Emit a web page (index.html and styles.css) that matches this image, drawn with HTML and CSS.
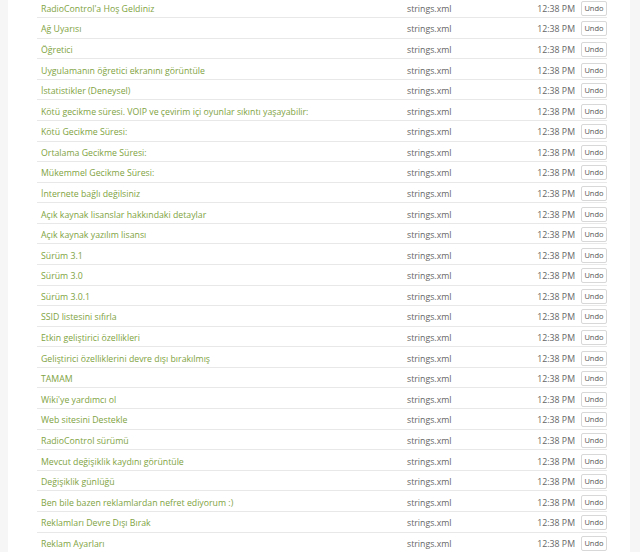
FILE: index.html
```html
<!DOCTYPE html>
<html>
<head>
<meta charset="utf-8">
<link rel="stylesheet" href="styles.css">
</head>
<body>
<div class="panel">
<table class="log">
<tbody>
<tr><td class="str">RadioControl'a Hoş Geldiniz</td><td class="file">strings.xml</td><td class="time">12:38 PM</td><td class="act"><button class="undo">Undo</button></td></tr>
<tr><td class="str">Ağ Uyarısı</td><td class="file">strings.xml</td><td class="time">12:38 PM</td><td class="act"><button class="undo">Undo</button></td></tr>
<tr><td class="str">Öğretici</td><td class="file">strings.xml</td><td class="time">12:38 PM</td><td class="act"><button class="undo">Undo</button></td></tr>
<tr><td class="str">Uygulamanın öğretici ekranını görüntüle</td><td class="file">strings.xml</td><td class="time">12:38 PM</td><td class="act"><button class="undo">Undo</button></td></tr>
<tr><td class="str">İstatistikler (Deneysel)</td><td class="file">strings.xml</td><td class="time">12:38 PM</td><td class="act"><button class="undo">Undo</button></td></tr>
<tr><td class="str">Kötü gecikme süresi. VOIP ve çevirim içi oyunlar sıkıntı yaşayabilir:</td><td class="file">strings.xml</td><td class="time">12:38 PM</td><td class="act"><button class="undo">Undo</button></td></tr>
<tr><td class="str">Kötü Gecikme Süresi:</td><td class="file">strings.xml</td><td class="time">12:38 PM</td><td class="act"><button class="undo">Undo</button></td></tr>
<tr><td class="str">Ortalama Gecikme Süresi:</td><td class="file">strings.xml</td><td class="time">12:38 PM</td><td class="act"><button class="undo">Undo</button></td></tr>
<tr><td class="str">Mükemmel Gecikme Süresi:</td><td class="file">strings.xml</td><td class="time">12:38 PM</td><td class="act"><button class="undo">Undo</button></td></tr>
<tr><td class="str">İnternete bağlı değilsiniz</td><td class="file">strings.xml</td><td class="time">12:38 PM</td><td class="act"><button class="undo">Undo</button></td></tr>
<tr><td class="str">Açık kaynak lisanslar hakkındaki detaylar</td><td class="file">strings.xml</td><td class="time">12:38 PM</td><td class="act"><button class="undo">Undo</button></td></tr>
<tr><td class="str">Açık kaynak yazılım lisansı</td><td class="file">strings.xml</td><td class="time">12:38 PM</td><td class="act"><button class="undo">Undo</button></td></tr>
<tr><td class="str">Sürüm 3.1</td><td class="file">strings.xml</td><td class="time">12:38 PM</td><td class="act"><button class="undo">Undo</button></td></tr>
<tr><td class="str">Sürüm 3.0</td><td class="file">strings.xml</td><td class="time">12:38 PM</td><td class="act"><button class="undo">Undo</button></td></tr>
<tr><td class="str">Sürüm 3.0.1</td><td class="file">strings.xml</td><td class="time">12:38 PM</td><td class="act"><button class="undo">Undo</button></td></tr>
<tr><td class="str">SSID listesini sıfırla</td><td class="file">strings.xml</td><td class="time">12:38 PM</td><td class="act"><button class="undo">Undo</button></td></tr>
<tr><td class="str">Etkin geliştirici özellikleri</td><td class="file">strings.xml</td><td class="time">12:38 PM</td><td class="act"><button class="undo">Undo</button></td></tr>
<tr><td class="str">Geliştirici özelliklerini devre dışı bırakılmış</td><td class="file">strings.xml</td><td class="time">12:38 PM</td><td class="act"><button class="undo">Undo</button></td></tr>
<tr><td class="str">TAMAM</td><td class="file">strings.xml</td><td class="time">12:38 PM</td><td class="act"><button class="undo">Undo</button></td></tr>
<tr><td class="str">Wiki'ye yardımcı ol</td><td class="file">strings.xml</td><td class="time">12:38 PM</td><td class="act"><button class="undo">Undo</button></td></tr>
<tr><td class="str">Web sitesini Destekle</td><td class="file">strings.xml</td><td class="time">12:38 PM</td><td class="act"><button class="undo">Undo</button></td></tr>
<tr><td class="str">RadioControl sürümü</td><td class="file">strings.xml</td><td class="time">12:38 PM</td><td class="act"><button class="undo">Undo</button></td></tr>
<tr><td class="str">Mevcut değişiklik kaydını görüntüle</td><td class="file">strings.xml</td><td class="time">12:38 PM</td><td class="act"><button class="undo">Undo</button></td></tr>
<tr><td class="str">Değişiklik günlüğü</td><td class="file">strings.xml</td><td class="time">12:38 PM</td><td class="act"><button class="undo">Undo</button></td></tr>
<tr><td class="str">Ben bile bazen reklamlardan nefret ediyorum :)</td><td class="file">strings.xml</td><td class="time">12:38 PM</td><td class="act"><button class="undo">Undo</button></td></tr>
<tr><td class="str">Reklamları Devre Dışı Bırak</td><td class="file">strings.xml</td><td class="time">12:38 PM</td><td class="act"><button class="undo">Undo</button></td></tr>
<tr><td class="str">Reklam Ayarları</td><td class="file">strings.xml</td><td class="time">12:38 PM</td><td class="act"><button class="undo">Undo</button></td></tr>
</tbody>
</table>
</div>
</body>
</html>
```
FILE: styles.css
```css
html, body {
  margin: 0;
  padding: 0;
  background: #f6f6f6;
  height: 100%;
  overflow: hidden;
}
body {
  font-family: "Open Sans", "Liberation Sans", sans-serif;
  font-size: 8.75px;
}
.panel {
  background: #ffffff;
  margin: 0 10px 0 8px;
  padding: 0 23px 0 29px;
  min-height: 100%;
  box-sizing: border-box;
  overflow: hidden;
}
.log {
  width: 100%;
  border-collapse: collapse;
  margin-top: -3px;
}
.log td {
  height: 20.58px;
  padding: 4px 0 0 0;
  border-bottom: 1px solid #e8e8e8;
  box-sizing: border-box;
  white-space: nowrap;
  vertical-align: middle;
  line-height: 13px;
}
.str {
  color: #80a342;
  padding-left: 4px !important;
}
.file {
  color: #666666;
  width: 112px;
}
.time {
  color: #666666;
  text-align: right;
  width: 62px;
  padding-right: 6px !important;
}
.act {
  width: 26px;
}
.undo {
  display: block;
  width: 26px;
  height: 15px;
  padding: 0;
  margin: -2px 0 0 0;
  font-family: "Open Sans", "Liberation Sans", sans-serif;
  font-size: 7.5px;
  color: #555555;
  background: #ffffff;
  border: 1px solid #d8d8d8;
  border-radius: 2px;
  line-height: 13px;
}
```
